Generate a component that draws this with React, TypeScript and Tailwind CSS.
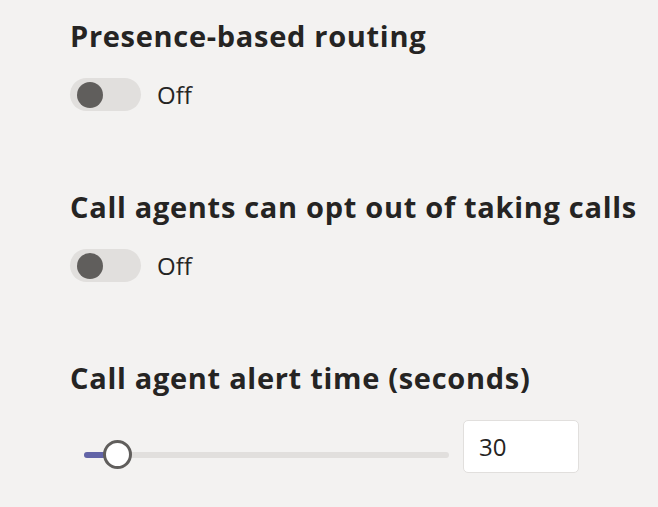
import { useState } from 'react'

function Toggle({ label }: { label: string }) {
  const [on, setOn] = useState(false)
  return (
    <div className="flex items-center gap-4">
      <button
        onClick={() => setOn(!on)}
        className={`relative w-[71px] h-[33px] rounded-full ${on ? 'bg-[#6264a7]' : 'bg-[#e1dfdd]'}`}
      >
        <span
          className={`absolute top-[4px] w-[26px] h-[26px] rounded-full ${on ? 'left-[39px] bg-white' : 'left-[7px] bg-[#605e5c]'}`}
        />
      </button>
      <span className="text-[24px] leading-none text-[#252423]">{on ? 'On' : label}</span>
    </div>
  )
}

function Heading({ children }: { children: string }) {
  return (
    <h2 className="text-[29px] leading-[36px] font-bold tracking-[0.7px] text-[#252423] whitespace-nowrap">
      {children}
    </h2>
  )
}

export default function App() {
  const [seconds, setSeconds] = useState('30')
  const pct = 6

  return (
    <div className="w-full h-[507px] bg-[#f3f2f1] pl-[70px] pt-[18px] font-['Open_Sans',sans-serif] overflow-hidden">
      <section className="h-[171px]">
        <Heading>Presence-based routing</Heading>
        <div className="mt-[24px]">
          <Toggle label="Off" />
        </div>
      </section>
      <section className="h-[171px]">
        <Heading>Call agents can opt out of taking calls</Heading>
        <div className="mt-[24px]">
          <Toggle label="Off" />
        </div>
      </section>
      <section>
        <Heading>Call agent alert time (seconds)</Heading>
        <div className="mt-[24px] flex items-start gap-[14px]">
          <div className="relative mt-[20px] ml-[14px] w-[365px] h-[29px] flex items-center">
            <div className="w-full h-[6px] rounded-full bg-[#e1dfdd]" />
            <div className="absolute left-0 h-[6px] rounded-full bg-[#6264a7]" style={{ width: `${pct}%` }} />
            <div className="absolute left-[19px] w-[29px] h-[29px] rounded-full bg-white border-[3px] border-[#605e5c]" />
          </div>
          <input
            value={seconds}
            onChange={e => setSeconds(e.target.value)}
            className="w-[116px] h-[53px] bg-white border border-[#e1dfdd] rounded-[5px] px-[15px] text-[24px] text-[#252423] outline-none"
          />
        </div>
      </section>
    </div>
  )
}
